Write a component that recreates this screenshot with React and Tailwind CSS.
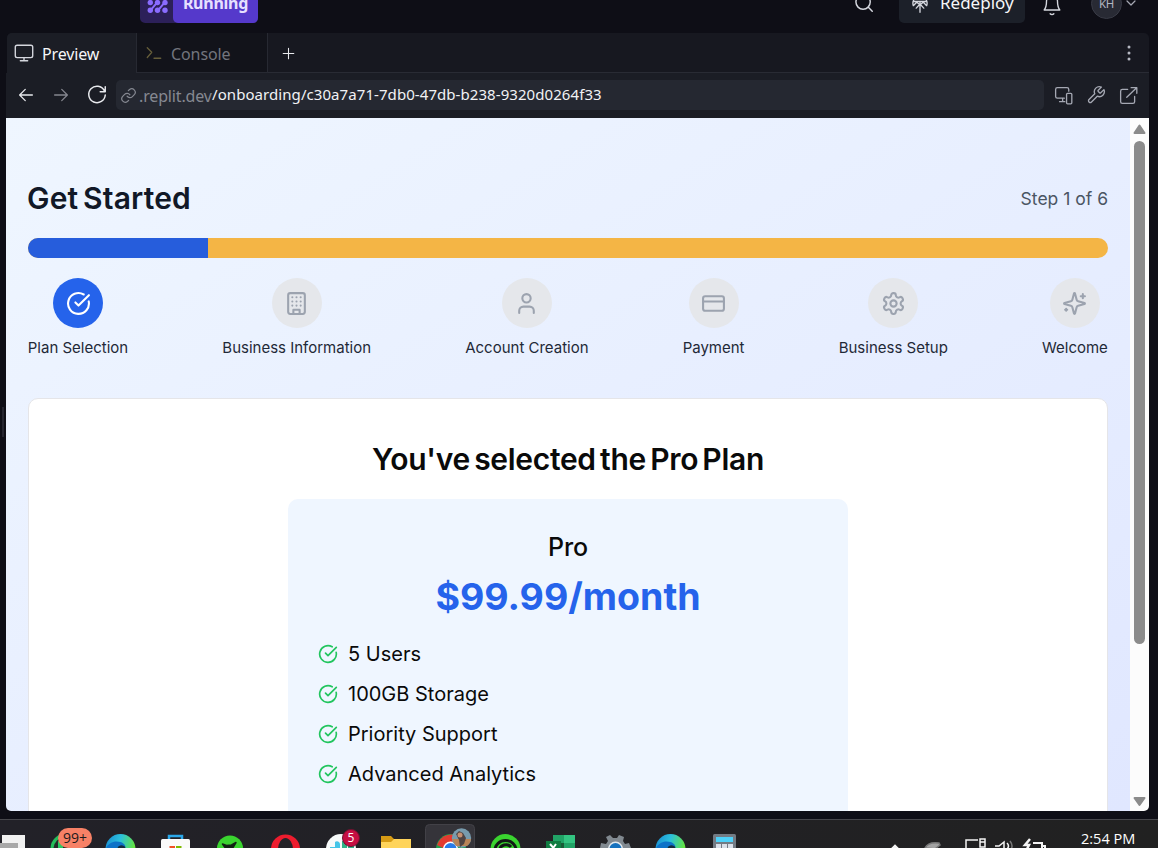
import React from "react";

function Stroke({ size, width = 2, className, children, box = 24 }) {
  return (
    <svg width={size} height={size} viewBox={`0 0 ${box} ${box}`} fill="none" stroke="currentColor" strokeWidth={width} strokeLinecap="round" strokeLinejoin="round" className={className}>
      {children}
    </svg>
  );
}

const icons = {
  check: (<><path d="M21.8 10A10 10 0 1 1 17 3.335" /><path d="m9 11 3 3L22 4" /></>),
  building: (<><rect width="16" height="20" x="4" y="2" rx="2" /><path d="M9 22v-4h6v4M8 6h.01M16 6h.01M12 6h.01M12 10h.01M12 14h.01M16 10h.01M16 14h.01M8 10h.01M8 14h.01" /></>),
  user: (<><path d="M19 21v-2a4 4 0 0 0-4-4H9a4 4 0 0 0-4 4v2" /><circle cx="12" cy="7" r="4" /></>),
  card: (<><rect width="20" height="14" x="2" y="5" rx="2" /><path d="M2 10h20" /></>),
  gear: (<><path d="M12.22 2h-.44a2 2 0 0 0-2 2v.18a2 2 0 0 1-1 1.73l-.43.25a2 2 0 0 1-2 0l-.15-.08a2 2 0 0 0-2.73.73l-.22.38a2 2 0 0 0 .73 2.73l.15.1a2 2 0 0 1 1 1.72v.51a2 2 0 0 1-1 1.74l-.15.09a2 2 0 0 0-.73 2.73l.22.38a2 2 0 0 0 2.73.73l.15-.08a2 2 0 0 1 2 0l.43.25a2 2 0 0 1 1 1.73V20a2 2 0 0 0 2 2h.44a2 2 0 0 0 2-2v-.18a2 2 0 0 1 1-1.73l.43-.25a2 2 0 0 1 2 0l.15.08a2 2 0 0 0 2.73-.73l.22-.39a2 2 0 0 0-.73-2.73l-.15-.08a2 2 0 0 1-1-1.74v-.5a2 2 0 0 1 1-1.74l.15-.09a2 2 0 0 0 .73-2.73l-.22-.38a2 2 0 0 0-2.73-.73l-.15.08a2 2 0 0 1-2 0l-.43-.25a2 2 0 0 1-1-1.73V4a2 2 0 0 0-2-2z" /><circle cx="12" cy="12" r="3" /></>),
  sparkles: (<><path d="M9.937 15.5A2 2 0 0 0 8.5 14.063l-6.135-1.582a.5.5 0 0 1 0-.962L8.5 9.936A2 2 0 0 0 9.937 8.5l1.582-6.135a.5.5 0 0 1 .963 0L14.063 8.5A2 2 0 0 0 15.5 9.937l6.135 1.581a.5.5 0 0 1 0 .964L15.5 14.063a2 2 0 0 0-1.437 1.437l-1.582 6.135a.5.5 0 0 1-.963 0z" /><path d="M20 3v4M22 5h-4M4 17v2M5 18H3" /></>),
};

function TopBar() {
  return (
    <header className="h-[33px] shrink-0 overflow-hidden">
      <div className="-mt-[9px] flex h-8 items-center">
        <div className="ml-[140px] flex h-8 w-[118px] overflow-hidden rounded-[5px] bg-[#2c2059]">
          <div className="flex w-[33px] items-center justify-center pl-[3px]">
            <svg width="22" height="22" viewBox="0 0 22 22" fill="#8a6cff">
              <circle cx="3.300" cy="6.600" r="2.700" /><circle cx="10.500" cy="6.600" r="2.700" /><circle cx="18" cy="6.600" r="2.700" />
              <circle cx="3.300" cy="14.300" r="2.700" /><circle cx="10.500" cy="14.300" r="2.700" /><circle cx="18" cy="14.300" r="2.700" />
              <path d="M3.500 14.300 10 6.600M11 14.300l6.500-7.700" stroke="#8a6cff" strokeWidth="2" />
            </svg>
          </div>
          <div className="flex flex-1 items-center justify-center rounded-l-[5px] bg-[#5539cb] pb-[8px] text-[16px] leading-[20px] font-bold tracking-[-0.25px] text-[#e6e0ff]">Running</div>
        </div>
        <Stroke size={22} width={1.6} className="mb-[8px] ml-[595px] text-[#d5d7de]"><circle cx="11" cy="11" r="7.8" /><path d="m17 17 4 4" /></Stroke>
        <div className="ml-[24px] flex h-8 w-[126px] items-center rounded-[5px] bg-[#1c2029] pb-[8px] pl-[11px]">
          <Stroke size={20} width={1.6} className="mt-[1px] text-[#d5d7de]"><path d="M4 14a8.500 8.500 0 1 1 16 0M12 22V10M4 14l4-4 4 3 4-3 4 4M7.500 17l4.500-5 4.500 5M4 9h16" /></Stroke>
          <span className="ml-[10px] text-[17px] leading-[20px] tracking-[0px] text-[#f5f6f8]">Redeploy</span>
        </div>
        <Stroke size={22} width={1.5} className="mb-[5px] ml-[16px] text-[#d5d7de]"><path d="M10 21.500c1 1.200 3 1.200 4 0M3.500 17.500h17C18.500 15 18 13 18 8A6 6 0 0 0 6 8c0 5-.5 7-2.500 9.500" /></Stroke>
        <div className="mb-[8px] ml-[28px] flex h-[31px] w-[31px] shrink-0 items-center justify-center rounded-full border border-[#393b46] bg-[#282a34] pt-[2px] text-[11.500px] leading-[16px] tracking-[-0.2px] text-[#b3b7c1]">KH</div>
        <Stroke size={12} width={2.4} className="mb-[8px] ml-[3px] text-[#a5a8b3]"><path d="m4 8 8 8 8-8" /></Stroke>
      </div>
    </header>
  );
}

function Tabs() {
  return (
    <div className="ml-px flex h-10 rounded-t-[5px] bg-[#171820]">
      <div className="flex w-[129px] items-center rounded-tl-[5px] bg-[#1b1d25] pl-[6px] text-[#f5f6f8]">
        <Stroke size={22} width={1.5} className="text-[#d5d7de]"><rect x="2.500" y="3.500" width="19" height="13.500" rx="2" /><path d="M12 17v3.500M8 20.500h8" /></Stroke>
        <span className="ml-[7px] pt-[1px] text-[16px] tracking-[-0.15px]">Preview</span>
      </div>
      <div className="flex w-[132px] items-center border-x border-b border-[#272932] bg-[#12131a] pl-[8px] text-[#72757e]">
        <Stroke size={18} width={1.7} className="text-[#665e3a]"><path d="m3 5 6 6-6 7M12 19h9" /></Stroke>
        <span className="ml-[8px] pt-[2px] text-[16px] tracking-[-0.1px]">Console</span>
      </div>
      <div className="flex flex-1 items-center justify-between border-b border-[#292b34] pr-[10px] pl-[12px]">
        <Stroke size={17} width={1.5} className="mt-[2px] text-[#e8e9ed]"><path d="M12 4.500v15M4.500 12h15" /></Stroke>
        <svg width="20" height="20" viewBox="0 0 20 20" fill="#b5b8c1"><circle cx="10" cy="4" r="1.500" /><circle cx="10" cy="10" r="1.500" /><circle cx="10" cy="16" r="1.500" /></svg>
      </div>
    </div>
  );
}

function AddressBar() {
  return (
    <div className="flex h-[45px] items-center bg-[#1b1d25] pb-[1px] pl-[11px] text-[#c7cad2]">
      <Stroke size={18} width={1.7} className="text-[#e8e9ed]"><path d="M20.500 12H4M11 4.500 3.500 12l7.500 7.500" /></Stroke>
      <Stroke size={18} width={1.7} className="ml-[17px] text-[#85868f]"><path d="M3.500 12H20M13 4.500l7.500 7.500-7.500 7.500" /></Stroke>
      <Stroke size={22} width={1.6} className="ml-[16px] text-[#e8e9ed]"><path d="M20 7.200A9 9 0 1 0 21 12M21 3v5.500h-5.500" /></Stroke>
      <div className="ml-[8px] flex h-[30px] w-[928px] items-center rounded-[5px] bg-[#252831] pl-[4px]">
        <Stroke size={17} width={1.7} className="text-[#858891]"><path d="M10 13a5 5 0 0 0 7.500.5l3-3a5 5 0 0 0-7-7l-1.700 1.700M14 11a5 5 0 0 0-7.500-.5l-3 3a5 5 0 0 0 7 7l1.700-1.700" /></Stroke>
        <span className="mt-[2px] ml-[2px] w-[73px] text-[16px] tracking-[-0.15px] whitespace-nowrap text-[#858891]">.replit.dev</span>
        <span className="mb-[2px] text-[15px] tracking-[0.07px] whitespace-nowrap text-[#f1f2f5]">/onboarding/c30a7a71-7db0-47db-b238-9320d0264f33</span>
      </div>
      <div className="ml-[9px] flex items-center gap-[12px] text-[#a5a8b3]">
        <Stroke size={21} width={1.5}><path d="M13 15H5a2 2 0 0 1-2-2V5a2 2 0 0 1 2-2h11a2 2 0 0 1 2 2v2M11 15v4M7.500 19h6" /><rect x="15.500" y="9.500" width="6" height="12" rx="1.200" /></Stroke>
        <Stroke size={20} width={1.6}><path d="M14.700 6.300a1 1 0 0 0 0 1.400l1.600 1.600a1 1 0 0 0 1.400 0l3.770-3.770a6 6 0 0 1-7.940 7.940l-6.910 6.910a2.120 2.120 0 0 1-3-3l6.910-6.910a6 6 0 0 1 7.940-7.940z" /></Stroke>
        <Stroke size={21} width={1.5}><path d="M15 3h6.500v6.500M10 14 21 3.500M19 13v6a2 2 0 0 1-2 2H5a2 2 0 0 1-2-2V7a2 2 0 0 1 2-2h6" /></Stroke>
      </div>
    </div>
  );
}

const steps = [
  { label: "Plan Selection", icon: "check", active: true, w: "w-[100px]" },
  { label: "Business Information", icon: "building", w: "w-[149px]" },
  { label: "Account Creation", icon: "user", w: "w-[123px]" },
  { label: "Payment", icon: "card", w: "w-[62px]" },
  { label: "Business Setup", icon: "gear", w: "w-[109px]" },
  { label: "Welcome", icon: "sparkles", w: "w-[66px]" },
];

const features = ["5 Users", "100GB Storage", "Priority Support", "Advanced Analytics"];

function Onboarding() {
  return (
    <main className="h-[693px] w-[1124px] overflow-hidden rounded-bl-[5px] bg-linear-to-br from-[#eff6ff] to-[#e0e7ff] px-[22px] font-[Inter,sans-serif]">
      <div className="flex items-center justify-between pt-[61px]">
        <h1 className="-ml-px text-[30px] leading-[38px] font-semibold tracking-[0.18px] text-[#111827] [word-spacing:-3px]">Get Started</h1>
        <span className="text-[17.500px] leading-[25px] text-[#4b5563]">Step 1 of 6</span>
      </div>
      <div className="mt-[21px] h-5 overflow-hidden rounded-full bg-[#f4b545]">
        <div className="h-full w-1/6 bg-[#265ddc]" />
      </div>
      <div className="mt-5 flex justify-between">
        {steps.map((s) => (
          <div key={s.label} className={`flex flex-col items-center ${s.w}`}>
            <div className={`flex h-[50px] w-[50px] items-center justify-center rounded-full ${s.active ? "bg-[#2563eb] text-white" : "bg-[#e5e7eb] text-[#9ca3af]"}`}>
              <Stroke size={25}>{icons[s.icon]}</Stroke>
            </div>
            <span className="mt-[10px] text-[15px] leading-5 whitespace-nowrap text-[#1f2937]">{s.label}</span>
          </div>
        ))}
      </div>
      <section className="mt-[40px] h-[500px] rounded-t-[10px] border border-[#e5e5e8] bg-white pt-[41px]">
        <h2 className="text-center text-[30px] leading-[38px] font-semibold tracking-[-0.3px] text-[#0a0a0a] [word-spacing:-3px]">You've selected the Pro Plan</h2>
        <div className="mx-auto mt-[21px] h-[400px] w-[560px] rounded-[10px] bg-[#eff6ff] px-[30px] pt-[31px] text-[#0a0a0a]">
          <div className="text-center text-[25px] leading-[35px] font-medium tracking-[-0.1px]">Pro</div>
          <div className="mt-[9px] text-center text-[37.500px] leading-[45px] font-bold text-[#2563eb]">$99.99/month</div>
          <ul className="mt-[20px] flex flex-col gap-[10px]">
            {features.map((f) => (
              <li key={f} className="flex h-[30px] items-center gap-[10px] text-[20px] leading-[30px]">
                <Stroke size={20} className="text-[#22c55e]">{icons.check}</Stroke>
                {f}
              </li>
            ))}
          </ul>
        </div>
      </section>
    </main>
  );
}

function Scrollbar() {
  return (
    <div className="flex h-[693px] w-[19px] flex-col items-center rounded-br-[5px] bg-[#fcfcfc]">
      <svg width="19" height="23" viewBox="0 0 19 23" fill="#8b8b8b" stroke="#8b8b8b" strokeWidth="2" strokeLinejoin="round"><path d="M4.500 15 9.500 7.500 14.500 15z" /></svg>
      <div className="h-[503px] w-[11px] rounded-full bg-[#8b8b8b]" />
      <div className="flex-1" />
      <svg width="19" height="20" viewBox="0 0 19 20" fill="#8b8b8b" stroke="#8b8b8b" strokeWidth="2" strokeLinejoin="round"><path d="M4.500 7h10l-5 7z" /></svg>
    </div>
  );
}

function Edge({ id }) {
  return (
    <>
      <defs>
        <linearGradient id={id} x1="0" x2="1" y2="0.3"><stop stopColor="#1788d1" /><stop offset="0.5" stopColor="#2cc0dc" /><stop offset="1" stopColor="#65e43f" /></linearGradient>
      </defs>
      <circle cx="27.500" cy="29" r="15" fill={`url(#${id})`} />
      <path d="M12.500 30c1-5 6-8.500 11-8.500 6 0 9 3 9 6-3-2-9-2-9 3z" fill="#0d72c8" />
      <path d="M24 32c-1-5 3-8 7-6 2 1 2 4 1 6z" fill="#142a3c" />
    </>
  );
}

const apps = [
  <><rect x="19" y="15" width="23" height="20" fill="#f1f1f1" /><rect x="10" y="23" width="25" height="10" fill="#a8a8a8" /></>,
  <><circle cx="27.500" cy="28.500" r="15" fill="#23bd5a" /><circle cx="27.500" cy="29" r="12" fill="#242a28" /><path d="M20 22c2-4 6-1 5 3v6h-5z" fill="#29c760" /></>,
  <Edge id="edge-a" />,
  <><path d="M21 20v-4h13v4" fill="none" stroke="#2ba8ea" strokeWidth="2.500" /><rect x="13" y="19" width="29" height="16" rx="1.500" fill="#fafafa" /><path d="M21.500 26h5.500v5h-5.500z" fill="#f05125" /><path d="M28 26h5.500v5H28z" fill="#7fb900" /></>,
  <><circle cx="27" cy="28.500" r="13" fill="#3ad42f" /><path d="m19.500 24 4 1.500 5-.5 4.500-2.500-3 5h-8z" fill="#112313" stroke="#112313" strokeWidth="1.500" strokeLinejoin="round" /></>,
  <><circle cx="27.500" cy="29" r="14.500" fill="#ed1c2e" /><ellipse cx="27.500" cy="30" rx="7.500" ry="12" fill="#242328" /></>,
  <><circle cx="28" cy="29" r="15" fill="#f7fafa" /><path d="M22 22a3 3 0 0 1 5 2v5h-5zM17 27h8v4h-8z" fill="#44c5e8" /><path d="M29 21h5v8h-5zM35 26h6v4h-6z" fill="#2fb387" /></>,
  <><path d="M13 30V16h10l3 3h15v12H13z" fill="#d69b14" /><path d="M13 22h10l3-3h17v12H13z" fill="#ffd45b" /></>,
  <><rect x="2.500" y="4.500" width="49" height="40" rx="4" fill="#35343a" stroke="#424147" /><circle cx="28" cy="29" r="15" fill="#239d4f" /><path d="M14 25a15 15 0 0 1 25-6l-5 8-10 3z" fill="#e33a30" /><circle cx="27.500" cy="29" r="7.500" fill="#fff" /><circle cx="27.500" cy="29" r="6" fill="#287be9" /><circle cx="38.500" cy="18" r="9.700" fill="#789bad" /><path d="M29 19h19a10 10 0 0 1-4 7H33z" fill="#b98457" /><path d="m33 14 3-3 4 2 3 5-2 6-4 3-1-7z" fill="#504443" /><circle cx="37" cy="15" r="2.500" fill="#c69071" /></>,
  <><circle cx="27.500" cy="29" r="15" fill="#3ad42f" /><path d="M17 30a10.500 9.500 0 0 1 21 0" fill="none" stroke="#121815" strokeWidth="3" /><path d="M33 27a6 5 0 0 0-11 3" fill="none" stroke="#121815" strokeWidth="3" /></>,
  <><rect x="20" y="15" width="22" height="16" fill="#21a366" /><rect x="31" y="15" width="11" height="8" fill="#33c481" /><rect x="20" y="23" width="11" height="8" fill="#185c37" /><rect x="13" y="21" width="15" height="14" fill="#107c41" /><path d="m17 24 6 7M23 24l-5 7" stroke="#fff" strokeWidth="2" /></>,
  <><path d="m12 28 1-5 5 1 2-3-2-4 4-2 3 3h4l2-3 5 2-1 4 2 3 4-1 2 5v5H12z" fill="#818990" /><circle cx="27.500" cy="29" r="7.500" fill="#e2e8ed" /><circle cx="27.500" cy="29" r="6" fill="#1772be" /></>,
  <Edge id="edge-b" />,
  <><rect x="15" y="14" width="23" height="20" rx="1.500" fill="#737b84" /><rect x="18" y="17" width="17" height="5" fill="#4ed2fa" /><path d="M18 24h5v6h-5zM24 24h5v6h-5zM30 24h5v6h-5z" fill="#d9dfe8" /></>,
];

function Taskbar() {
  return (
    <footer className="flex h-[29px] shrink-0 items-start overflow-hidden border-t border-[#47474c] bg-linear-to-r from-[#222128] to-[#212121]">
      <div className="-ml-[17px] flex shrink-0">
        {apps.map((a, i) => (
          <div key={i} className="relative h-7 w-[55px] shrink-0">
            <svg width="55" height="28" viewBox="0 0 55 28">{a}</svg>
            {i === 1 && <span className="absolute top-[8px] left-[20px] flex h-[20px] w-[34px] items-center justify-center rounded-full bg-[#f78166] font-['Open_Sans',sans-serif] text-[14px] leading-none text-[#1d1a1c]">99+</span>}
            {i === 6 && <span className="absolute top-[9px] left-[29px] flex h-[18px] w-[18px] items-center justify-center rounded-full border border-[#6d1230] bg-[#c60f43] font-['Open_Sans',sans-serif] text-[12px] leading-none text-white">5</span>}
          </div>
        ))}
      </div>
      <svg width="175" height="28" viewBox="0 0 175 28" className="ml-[122px] shrink-0" fill="none" stroke="#f4f4f4" strokeWidth="1.500">
        <path d="m16 30 4-4 4 4" strokeWidth="2.500" />
        <path d="M50 28c2-4 7-6 14-5l1 2-5 4z" fill="#a2a2a2" stroke="#777" />
        <path d="M103 20H91v11M105 19h5v8h-5zM105 22h5M101 29h7" />
        <path d="M120 26h4l5-4v10M132 23q3 3 0 6" /><path d="M135 21q4 5 0 10" stroke="#777" /><path d="m155 19-5 6h4l-2 4" strokeWidth="2.500" /><path d="M158 23h9v8" strokeWidth="2" />
        <path d="M167 26h3v4" strokeWidth="2" />
      </svg>
      <span className="mt-[10px] ml-[31px] font-['Open_Sans',sans-serif] text-[14.500px] leading-[18px] whitespace-nowrap text-white">2:54 PM</span>
    </footer>
  );
}

export default function App() {
  return (
    <div className="flex h-[848px] w-[1158px] flex-col overflow-hidden bg-[#0e0e16] font-['Noto_Sans',sans-serif]">
      <TopBar />
      <div className="flex h-[786px]">
        <div className="flex w-[6px] items-center justify-center"><div className="mt-[-8px] h-[30px] w-[2px] bg-[#25252f]" /></div>
        <div className="w-[1143px]">
          <Tabs />
          <AddressBar />
          <div className="flex"><Onboarding /><Scrollbar /></div>
        </div>
      </div>
      <Taskbar />
    </div>
  );
}
